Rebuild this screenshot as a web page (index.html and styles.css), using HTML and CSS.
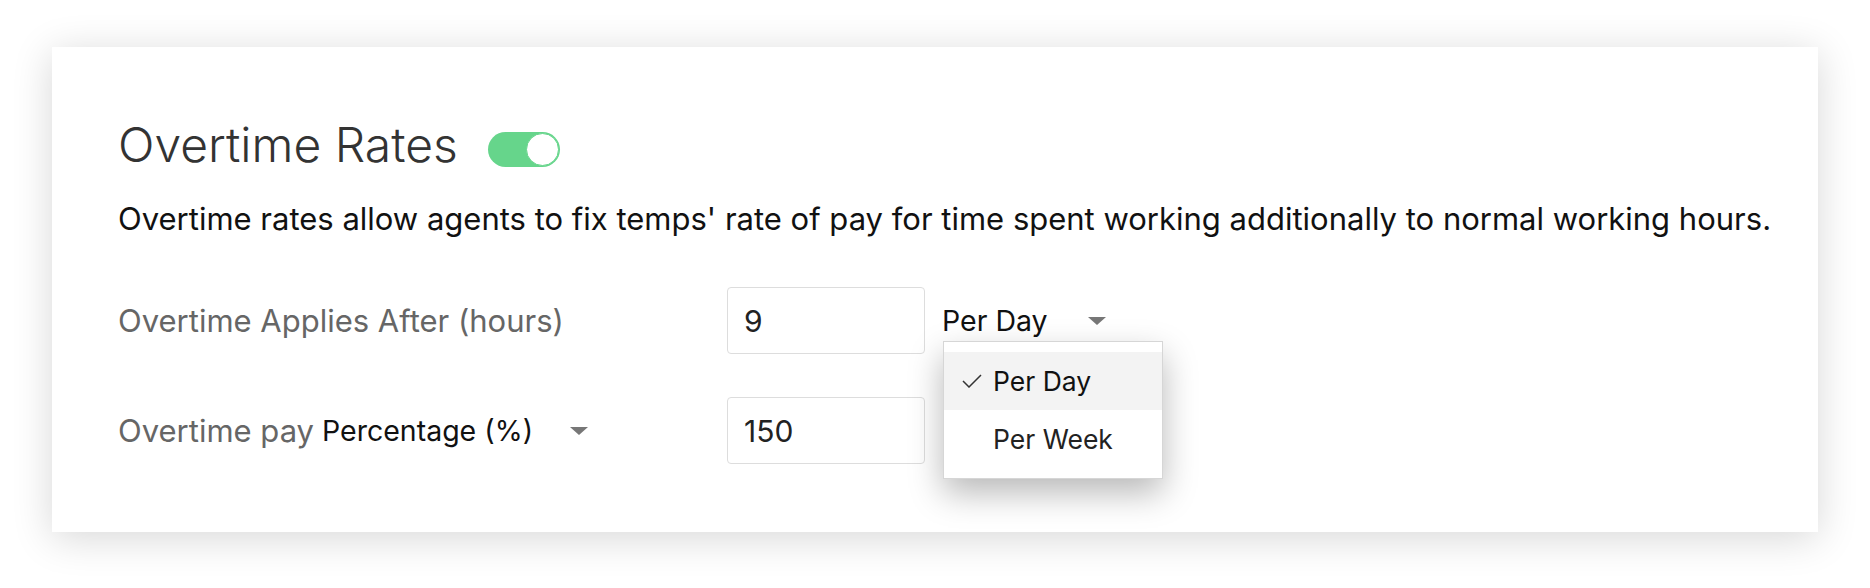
FILE: index.html
```html
<!DOCTYPE html>
<html lang="en">
<head>
<meta charset="utf-8">
<title>Overtime Rates</title>
<link rel="stylesheet" href="styles.css">
</head>
<body>
<div class="page">
  <section class="card">
    <div class="head">
      <h1 class="title">Overtime Rates</h1>
      <span class="toggle"><span class="knob"></span></span>
    </div>
    <p class="desc">Overtime rates allow agents to fix temps' rate of pay for time spent working additionally to normal working hours.</p>
    <div class="form">
      <div class="row">
        <div class="label">Overtime Applies After (hours)</div>
        <div class="input">9</div>
        <div class="select select-period">
          <span class="select-text">Per Day</span>
          <svg class="caret" width="18" height="8" viewBox="0 0 18 8"><polygon points="0,0 18,0 9,8" fill="#777"/></svg>
          <div class="menu">
            <div class="option active">
              <svg class="check" width="20" height="14" viewBox="0 0 20 14"><polyline points="1,7 7,13 19,1" fill="none" stroke="#333" stroke-width="1.5"/></svg>
              <span>Per Day</span>
            </div>
            <div class="option">
              <span class="check-space"></span>
              <span>Per Week</span>
            </div>
          </div>
        </div>
      </div>
      <div class="row">
        <div class="label">
          <span>Overtime pay</span>
          <div class="select select-type">
            <span class="select-text">Percentage (%)</span>
            <svg class="caret" width="18" height="8" viewBox="0 0 18 8"><polygon points="0,0 18,0 9,8" fill="#777"/></svg>
          </div>
        </div>
        <div class="input">150</div>
      </div>
    </div>
  </section>
</div>
</body>
</html>
```
FILE: styles.css
```css
* { box-sizing: border-box; }
html, body { margin: 0; background: #fff; }
body { font-family: Inter, "Noto Sans", "Liberation Sans", sans-serif; color: #111; }

.page { padding: 47px 52px 56px; }

.card {
  background: #fff;
  height: 485px;
  padding: 68px 66px 0;
  box-shadow: 0 6px 38px rgba(0, 0, 0, 0.16);
}

.head { display: flex; align-items: flex-start; height: 60px; }
.title {
  margin: 0;
  font-size: 48px;
  line-height: 60px;
  font-weight: 300;
  color: #333;
}
.toggle {
  margin: 17px 0 0 30px;
  width: 72px;
  height: 35px;
  border-radius: 18px;
  background: #66d58b;
  display: flex;
  justify-content: flex-end;
  padding: 1px;
}
.knob {
  width: 33px;
  height: 33px;
  border-radius: 50%;
  background: #fff;
  border: 1px solid #66d58b;
}

.desc {
  margin: 24px 0 0;
  font-size: 31px;
  line-height: 40px;
  color: #111;
  white-space: nowrap;
}

.form { margin-top: 48px; display: flex; flex-direction: column; gap: 43px; }
.row { display: flex; align-items: center; height: 67px; }
.label {
  width: 609px;
  font-size: 31px;
  color: #666;
  display: flex;
  align-items: center;
}
.input {
  width: 198px;
  height: 67px;
  border: 1px solid #ddd;
  border-radius: 4px;
  padding-left: 16px;
  display: flex;
  align-items: center;
  font-size: 30px;
  color: #222;
}

.select {
  position: relative;
  display: flex;
  align-items: center;
  justify-content: space-between;
  font-size: 28.5px;
  color: #111;
}
.select-period { margin-left: 17px; width: 164px; height: 67px; }
.select-type { margin-left: 8px; width: 266px; }
.caret { display: block; }

.menu {
  position: absolute;
  top: 54px;
  left: 1px;
  width: 220px;
  background: #fff;
  border: 1px solid #d6d6d6;
  padding: 10px 0;
  box-shadow: 0 14px 32px rgba(0, 0, 0, 0.28);
  z-index: 2;
}
.option {
  height: 58px;
  display: flex;
  align-items: center;
  padding-left: 18px;
  gap: 11px;
  font-size: 26.5px;
  color: #222;
}
.option.active { background: #f3f3f3; color: #111; }
.check { display: block; }
.check-space { width: 20px; }
```
